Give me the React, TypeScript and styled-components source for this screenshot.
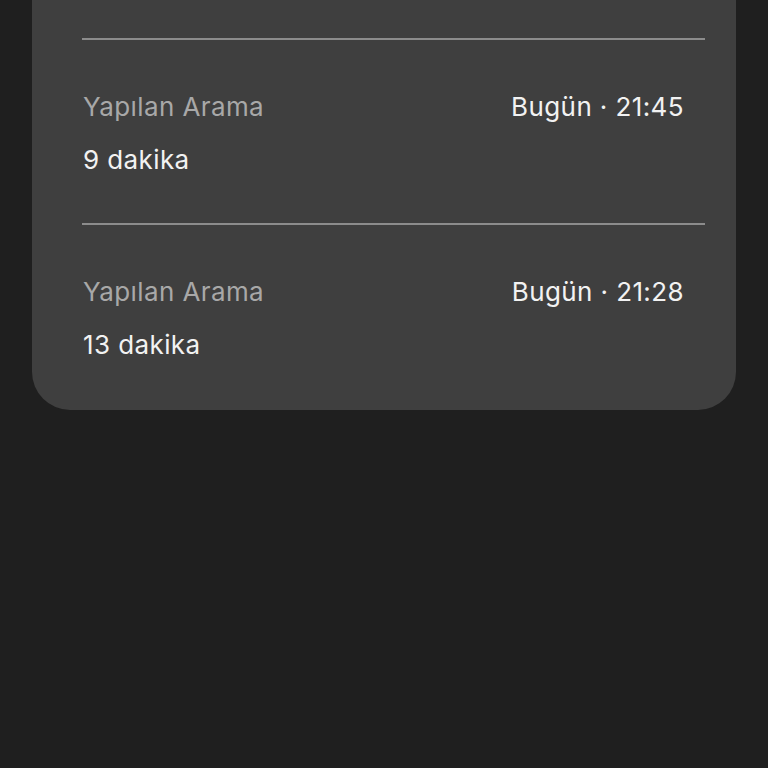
import React from "react";
import styled, { createGlobalStyle } from "styled-components";

const GlobalStyle = createGlobalStyle`
  html, body {
    margin: 0;
    padding: 0;
    background: #1f1f1f;
  }
  body {
    font-family: Inter, "Noto Sans", "Liberation Sans", sans-serif;
    -webkit-font-smoothing: antialiased;
  }
`;

const Page = styled.div`
  width: 768px;
  height: 768px;
  background: #1f1f1f;
  box-sizing: border-box;
  padding: 0 32px;
  overflow: hidden;
`;

const Card = styled.section`
  background: #3f3f3f;
  border-radius: 0 0 38px 38px;
  padding: 38px 31px 2px 50px;
  display: flex;
  flex-direction: column;
`;

const Row = styled.div`
  border-top: 2px solid #8c8c8c;
  padding: 51px 0 47px 1px;
  display: flex;
  flex-direction: column;
  gap: 21px;
`;

const TopLine = styled.div`
  display: flex;
  justify-content: space-between;
  align-items: baseline;
  padding-right: 21px;
  line-height: 32px;
`;

const Label = styled.span`
  font-size: 26px;
  color: #a8a8a8;
  letter-spacing: 0.4px;
`;

const Time = styled.span`
  font-size: 26px;
  color: #f2f2f2;
  letter-spacing: 0.4px;
`;

const Duration = styled.div`
  font-size: 26px;
  line-height: 32px;
  color: #f2f2f2;
  letter-spacing: 0.4px;
`;

const calls = [
  { type: "Yapılan Arama", when: "Bugün · 21:45", duration: "9 dakika" },
  { type: "Yapılan Arama", when: "Bugün · 21:28", duration: "13 dakika" },
];

export default function App() {
  return (
    <>
      <GlobalStyle />
      <Page>
        <Card>
          {calls.map((c, i) => (
            <Row key={i}>
              <TopLine>
                <Label>{c.type}</Label>
                <Time>{c.when}</Time>
              </TopLine>
              <Duration>{c.duration}</Duration>
            </Row>
          ))}
        </Card>
      </Page>
    </>
  );
}
